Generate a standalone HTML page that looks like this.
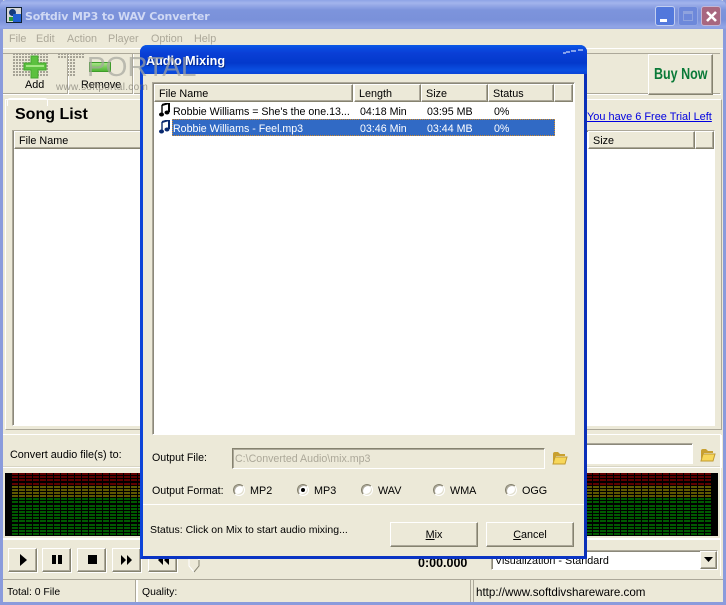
<!DOCTYPE html>
<html><head><meta charset="utf-8">
<style>
html,body{margin:0;padding:0;width:726px;height:605px;overflow:hidden;background:#ece9d8}
*{box-sizing:border-box}
body{font:10.8px/13px "Liberation Sans",sans-serif;color:#000;position:relative}
.a{position:absolute}
.t{position:absolute;white-space:nowrap;margin-top:1px}
.raised{position:absolute;background:#ece9d8;border:1px solid;border-color:#fff #85826f #85826f #fff;box-shadow:inset -1px -1px 0 #aca899}
.sunk{position:absolute;background:#fff;border:1px solid;border-color:#aca899 #fff #fff #aca899;box-shadow:inset 1px 1px 0 #8b887a}
.hd{position:absolute;background:#ece9d8;border:1px solid;border-color:#fff #85826f #85826f #fff;box-shadow:inset -1px -1px 0 #aca899;padding:3px 0 0 4px;height:18px;white-space:nowrap;font-size:10.8px}
.btn{position:absolute;background:#ece9d8;border:1px solid;border-color:#fff #85826f #85826f #fff;box-shadow:1px 1px 0 #fff,inset -1px -1px 0 #aca899;text-align:center}
.led{position:absolute;background:#000;overflow:hidden}
.radio{position:absolute;width:12px;height:12px;border-radius:50%;background:#fff;border:1px solid;border-color:#85826f #fff #fff #85826f;box-shadow:inset 1px 1px 0 #aca899,inset -1px -1px 0 #e0ddcc}
.gl{position:absolute;background:#fff;height:1px}
.r{font-size:10.65px}
.f{font-size:10.4px}
</style></head><body>

<!-- main window frame -->
<div class="a" style="left:0;top:0;width:726px;height:605px;border:3px solid #8a9bdc;border-top:0;border-bottom-width:3px"></div>
<div class="a" style="left:0;top:0;width:726px;height:29px;border-radius:6px 6px 0 0;background:linear-gradient(180deg,#8ea3e6 0,#a3b4ec 3px,#7d94dc 10px,#7a91da 20px,#92a6e6 27px,#8a9ee0 29px)"></div>
<div class="a" style="left:6px;top:7px;width:16px;height:16px;background:#d8d8d8;border:1px solid #123"><div class="a" style="left:2px;top:1px;width:7px;height:7px;background:#123a7c;border-radius:50%"></div><div class="a" style="left:6px;top:6px;width:8px;height:8px;background:#1f5fd0"></div><div class="a" style="left:2px;top:9px;width:4px;height:4px;background:#2a9a3a"></div></div>
<div class="t" style="left:25px;top:8px;font:bold 11px/15px 'DejaVu Sans',sans-serif;color:#cfd8f4;letter-spacing:-.15px">Softdiv MP3 to WAV Converter</div>
<div class="a" style="left:655px;top:6px;width:20px;height:20px;border-radius:3px;background:#5278dc;border:1px solid #c3cff0"><div class="a" style="left:4px;top:12px;width:7px;height:3px;background:#fff"></div></div>
<div class="a" style="left:678px;top:6px;width:20px;height:20px;border-radius:3px;background:#6d88da;border:1px solid #94a7e4"><div class="a" style="left:4px;top:4px;width:10px;height:10px;border:1px solid #8fa3de;border-top-width:3px"></div></div>
<div class="a" style="left:701px;top:6px;width:20px;height:20px;border-radius:3px;background:#a8677f;border:1px solid #c3b6d4"><svg class="a" style="left:3px;top:3px" width="13" height="13"><path d="M2 2L11 11M11 2L2 11" stroke="#fff" stroke-width="2.600"/></svg></div>

<!-- menu -->
<div class="t" style="left:9px;top:32px;color:#aca899">File</div>
<div class="t" style="left:36px;top:32px;color:#aca899">Edit</div>
<div class="t" style="left:67px;top:32px;color:#aca899">Action</div>
<div class="t" style="left:108px;top:32px;color:#aca899">Player</div>
<div class="t" style="left:151px;top:32px;color:#aca899">Option</div>
<div class="t" style="left:194px;top:32px;color:#aca899">Help</div>
<div class="gl" style="left:3px;top:48px;width:720px"></div>

<!-- toolbar -->
<div class="a" style="left:3px;top:49px;width:718px;height:46px;border-bottom:1px solid #fff"></div>
<div class="a" style="left:3px;top:53px;width:717px;height:1px;background:#aca899"></div>
<div class="a" style="left:3px;top:93px;width:717px;height:1px;background:#aca899"></div>
<div class="a" style="left:67px;top:54px;width:2px;height:40px;background:linear-gradient(90deg,#aca899 50%,#fff 50%)"></div>
<div class="a" style="left:132px;top:54px;width:2px;height:40px;background:linear-gradient(90deg,#aca899 50%,#fff 50%)"></div>
<!-- watermark dots -->
<svg class="a" style="left:13px;top:53px" width="74" height="25"><defs><pattern id="d" width="3" height="3" patternUnits="userSpaceOnUse"><rect width="2" height="2" fill="#a6a396"/></pattern></defs><rect width="36" height="24" fill="url(#d)"/><rect x="44" width="28" height="6" fill="url(#d)"/><rect x="55" y="6" width="7" height="18" fill="url(#d)"/></svg>
<svg class="a" style="left:23px;top:55px" width="24" height="24"><path d="M8 1h7v7h8v7h-8v8H8v-8H1V8h7z" fill="#5cc13f" stroke="#45a82f"/><path d="M3 10h18v2H3z" fill="#a4e684"/></svg>
<div class="t" style="left:25px;top:78px">Add</div>
<div class="a" style="left:89px;top:62px;width:22px;height:10px;background:linear-gradient(180deg,#a6e486,#4fb634);border:1px solid #3e9c2a"></div>
<div class="t" style="left:81px;top:78px">Remove</div>

<!-- buy now -->
<div class="raised" style="left:648px;top:54px;width:65px;height:41px"></div>
<div class="t" style="left:654px;top:65px;font:bold 12.5px/16px 'Liberation Sans',sans-serif;color:#0a7a38;transform:scaleY(1.25)">Buy Now</div>

<!-- song list panel -->
<div class="a" style="left:5px;top:99px;width:717px;height:331px;border:1px solid;border-color:#fff #aca899 #aca899 #fff"></div>
<div class="a" style="left:7px;top:98px;width:41px;height:8px;border:1px solid #fff;border-bottom:0;border-radius:3px 3px 0 0"></div>
<div class="t" style="left:15px;top:104px;font:bold 16px/19px 'Liberation Sans',sans-serif">Song List</div>
<div class="t" style="left:587px;top:110px;color:#0000e0;text-decoration:underline;font-size:10.95px">You have 6 Free Trial Left</div>
<div class="sunk" style="left:12px;top:130px;width:703px;height:296px"></div>
<div class="hd" style="left:14px;top:131px;width:180px;">File Name</div>
<div class="hd" style="left:588px;top:131px;width:107px;">Size</div>
<div class="hd" style="left:695px;top:131px;width:19px"></div>

<!-- convert row -->
<div class="gl" style="left:3px;top:434px;width:718px"></div>
<div class="a" style="left:3px;top:435px;width:719px;height:33px;border-bottom:1px solid #fff;border-right:1px solid #fff;box-shadow:inset 0 -1px 0 #d8d5c4"></div>
<div class="t" style="left:10px;top:448px">Convert audio file(s) to:</div>
<div class="sunk" style="left:570px;top:443px;width:123px;height:21px"></div>
<svg class="a" style="left:700px;top:448px" width="16" height="14"><path d="M1 3q0-2 2-2h3l2 2h5v2H4L1 11z" fill="#c8a030"/><path d="M1 13l2-7h12l-2 7z" fill="#f7d75a" stroke="#c09a30"/></svg>

<!-- visualizer -->
<div class="led" style="left:5px;top:473px;width:136px;height:63px"></div>
<div class="led" style="left:586px;top:473px;width:132px;height:63px"></div>
<svg class="a" style="left:12px;top:473px" width="130" height="63"><defs><pattern id="gap" width="7" height="63" patternUnits="userSpaceOnUse"><rect x="6" width="1" height="63" fill="#000"/></pattern>
<g id="leds"><path fill="#5e0000" d="M0 0h130v2H0zM0 3h130v2H0zM0 6h130v2H0zM0 10h130v2H0z"/><path fill="#5e5800" d="M0 13h130v2H0zM0 16h130v2H0zM0 19h130v2H0zM0 22h130v2H0z"/><path fill="#005a00" d="M0 25h130v2H0zM0 28h130v2H0zM0 32h130v2H0zM0 35h130v2H0zM0 38h130v2H0zM0 41h130v2H0zM0 44h130v2H0zM0 47h130v2H0zM0 51h130v2H0zM0 54h130v2H0zM0 57h130v2H0zM0 60h130v2H0z"/><rect width="130" height="63" fill="url(#gap)"/></g></defs><use href="#leds"/></svg>
<svg class="a" style="left:586px;top:473px" width="125" height="63"><use href="#leds"/></svg>
<div class="gl" style="left:3px;top:538px;width:718px;height:2px"></div>
<div class="a" style="left:720px;top:435px;width:1px;height:141px;background:#fff"></div>

<!-- transport -->
<div class="btn" style="left:8px;top:548px;width:29px;height:24px"><svg width="12" height="14" style="margin-top:4px"><path d="M3 1l7 6-7 6z"/></svg></div>
<div class="btn" style="left:42px;top:548px;width:29px;height:24px"><svg width="12" height="14" style="margin-top:4px"><path d="M1 2h4v9H1zM7 2h4v9H7z"/></svg></div>
<div class="btn" style="left:77px;top:548px;width:29px;height:24px"><svg width="12" height="14" style="margin-top:4px"><path d="M2 2h9v9H2z"/></svg></div>
<div class="btn" style="left:112px;top:548px;width:29px;height:24px"><svg width="14" height="14" style="margin-top:4px"><path d="M1 2l5 5-5 5zM7 2l5 5-5 5z"/></svg></div>
<div class="btn" style="left:148px;top:548px;width:29px;height:24px"><svg width="14" height="14" style="margin-top:4px"><path d="M13 2L8 7l5 5zM7 2L2 7l5 5z"/></svg></div>
<svg class="a" style="left:188px;top:556px" width="13" height="18"><path d="M1 0v10l5 6 5-6V0" fill="#ece9d8" stroke="#fff"/><path d="M6 16l5-6V4" fill="none" stroke="#85826f"/></svg>
<div class="t" style="left:418px;top:555px;font:bold 12.5px/15px 'Liberation Sans',sans-serif">0:00.000</div>
<div class="sunk" style="left:491px;top:550px;width:227px;height:20px"></div>
<div class="t" style="left:495px;top:554px">Visualization - Standard</div>
<div class="raised" style="left:700px;top:551px;width:17px;height:18px"><svg class="a" style="left:3px;top:5px" width="9" height="6"><path d="M0 0h9L4.500 5z"/></svg></div>

<!-- status bar -->
<div class="a" style="left:3px;top:579px;width:720px;height:1px;background:#aca899"></div>
<div class="a" style="left:3px;top:580px;width:133px;height:22px;border-right:1px solid #aca899"></div>
<div class="a" style="left:136px;top:580px;width:2px;height:22px;background:#fff"></div>
<div class="a" style="left:470px;top:580px;width:1px;height:22px;background:#aca899"></div>
<div class="a" style="left:473px;top:580px;width:1px;height:22px;background:#aca899"></div>
<div class="t f" style="left:7px;top:585px">Total: 0 File</div>
<div class="t f" style="left:142px;top:585px">Quality:</div>
<div class="t" style="left:476px;top:585px;font-size:11.6px">http://www.softdivshareware.com</div>

<!-- dialog -->
<div class="a" style="left:140px;top:45px;width:447px;height:514px;background:#ece9d8;border:3px solid #0d44d8;border-right-color:#0a2fb8;border-bottom-color:#0a34c4;border-top:0;border-radius:7px 7px 0 0"></div>
<div class="a" style="left:140px;top:45px;width:447px;height:29px;border-radius:7px 7px 0 0;background:linear-gradient(180deg,#0a5be6 0,#0a4be0 3px,#0a3fd6 8px,#0339cc 18px,#0a4fe0 25px,#0a44d8 29px)"></div>
<svg class="a" style="left:562px;top:48px" width="24" height="6"><path d="M1 5h3M4 4h4M9 3h5M16 2h5" stroke="#fff" stroke-width="1" fill="none"/></svg>
<div class="t" style="left:146px;top:53px;font:bold 12.6px/15px 'Liberation Sans',sans-serif;color:#fff;text-shadow:1px 1px 0 #022a90">Audio Mixing</div>

<!-- dialog list -->
<div class="sunk" style="left:152px;top:82px;width:423px;height:353px"></div>
<div class="hd" style="left:154px;top:84px;width:199px">File Name</div>
<div class="hd" style="left:354px;top:84px;width:67px">Length</div>
<div class="hd" style="left:421px;top:84px;width:67px">Size</div>
<div class="hd" style="left:488px;top:84px;width:66px">Status</div>
<div class="hd" style="left:554px;top:84px;width:19px"></div>

<svg class="a" style="left:159px;top:103px" width="11" height="14"><path d="M3 2L10 0V9" fill="none" stroke="#000" stroke-width="2"/><path d="M3 2V11" stroke="#000" stroke-width="1.4"/><ellipse cx="2.500" cy="11.500" rx="2.500" ry="2"/><ellipse cx="8" cy="9.500" rx="2.500" ry="2"/></svg>
<div class="t r" style="left:173px;top:105px">Robbie Williams = She's the one.13...</div>
<div class="t r" style="left:360px;top:105px">04:18 Min</div>
<div class="t r" style="left:427px;top:105px">03:95 MB</div>
<div class="t r" style="left:494px;top:105px">0%</div>

<svg class="a" style="left:159px;top:120px" width="11" height="14"><path d="M3 2L10 0V9" fill="none" stroke="#0a2a70" stroke-width="2"/><path d="M3 2V11" stroke="#0a2a70" stroke-width="1.4"/><ellipse cx="2.500" cy="11.500" rx="2.500" ry="2" fill="#0a2a70"/><ellipse cx="8" cy="9.500" rx="2.500" ry="2" fill="#0a2a70"/></svg>
<div class="a" style="left:172px;top:119px;width:383px;height:17px;background:#316ac5;outline:1px dotted #d08a2a;outline-offset:-1px"></div>
<div class="t r" style="left:173px;top:122px;color:#fff">Robbie Williams - Feel.mp3</div>
<div class="t r" style="left:360px;top:122px;color:#fff">03:46 Min</div>
<div class="t r" style="left:427px;top:122px;color:#fff">03:44 MB</div>
<div class="t r" style="left:494px;top:122px;color:#fff">0%</div>

<!-- output file -->
<div class="t r" style="left:152px;top:451px">Output File:</div>
<div class="a" style="left:232px;top:448px;width:313px;height:21px;background:#ece9d8;border:1px solid;border-color:#85826f #fff #fff #85826f;box-shadow:inset 1px 1px 0 #aca899"></div>
<div class="t r" style="left:235px;top:452px;color:#aca899">C:\Converted Audio\mix.mp3</div>
<svg class="a" style="left:552px;top:451px" width="16" height="14"><path d="M1 3q0-2 2-2h3l2 2h5v2H4L1 11z" fill="#c8a030"/><path d="M1 13l2-7h12l-2 7z" fill="#f7d75a" stroke="#c09a30"/></svg>

<!-- format -->
<div class="t r" style="left:152px;top:484px">Output Format:</div>
<div class="radio" style="left:233px;top:484px"></div><div class="t" style="left:250px;top:484px">MP2</div>
<div class="radio" style="left:297px;top:484px"><div class="a" style="left:3px;top:3px;width:4px;height:4px;border-radius:50%;background:#000"></div></div><div class="t" style="left:314px;top:484px">MP3</div>
<div class="radio" style="left:361px;top:484px"></div><div class="t" style="left:378px;top:484px">WAV</div>
<div class="radio" style="left:433px;top:484px"></div><div class="t" style="left:450px;top:484px">WMA</div>
<div class="radio" style="left:505px;top:484px"></div><div class="t" style="left:522px;top:484px">OGG</div>
<div class="gl" style="left:143px;top:504px;width:441px"></div>

<!-- status / buttons -->
<div class="t" style="left:150px;top:523px;font-size:10.5px">Status: Click on Mix to start audio mixing...</div>
<div class="btn" style="left:390px;top:522px;width:88px;height:25px;padding-top:6px;box-shadow:inset -1px -1px 0 #aca899"><u>M</u>ix</div>
<div class="btn" style="left:486px;top:522px;width:88px;height:25px;padding-top:6px;box-shadow:inset -1px -1px 0 #aca899"><u>C</u>ancel</div>

<!-- watermark above everything -->
<div class="t" style="left:87px;top:50px;font:28px/32px 'Liberation Sans',sans-serif;color:rgba(165,165,158,.7)">PORTAL</div>
<div class="t" style="left:56px;top:80px;color:rgba(125,123,112,.7);font-size:10px;letter-spacing:.3px">www.softportal.com</div>
</body></html>
